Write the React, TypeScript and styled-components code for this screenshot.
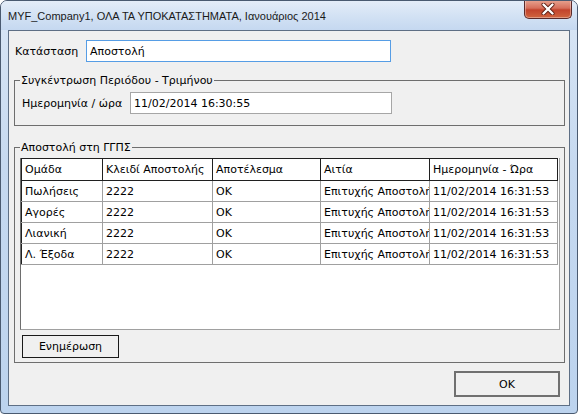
import React from "react";
import styled, { createGlobalStyle } from "styled-components";

const Global = createGlobalStyle`
  html, body { margin: 0; padding: 0; background: #ffffff; }
  body { width: 578px; height: 414px; overflow: hidden; }
  * { box-sizing: border-box; }
`;

const Window = styled.div`
  width: 578px;
  height: 414px;
  display: flex;
  flex-direction: column;
  border: 1px solid #4a5a70;
  border-radius: 7px 7px 4px 4px;
  background: linear-gradient(180deg, #d9e6f5 0%, #c6d9f0 40%, #bcd3ee 100%);
  font-family: "DejaVu Sans", Tahoma, sans-serif;
  font-size: 11px;
  color: #000;
  overflow: hidden;
`;

const TitleBar = styled.div`
  height: 29px;
  display: flex;
  align-items: flex-start;
  justify-content: space-between;
  padding: 0 5px 0 7px;
  background: linear-gradient(180deg, #e4edf8 0%, #d3e2f4 50%, #c5d8f0 100%);
`;

const TitleText = styled.div`
  font-family: "Liberation Sans", Arial, sans-serif;
  font-size: 11px;
  line-height: 14px;
  margin-top: 8px;
  color: #1a1a1a;
  white-space: nowrap;
`;

const CloseButton = styled.div`
  width: 48px;
  height: 19px;
  margin-top: -1px;
  border: 1px solid #5a2a2a;
  border-top: none;
  border-radius: 0 0 5px 5px;
  background: linear-gradient(180deg, #e8a592 0%, #d66f5b 45%, #c2432c 55%, #d0653f 100%);
  display: flex;
  align-items: center;
  justify-content: center;
  box-shadow: inset 0 0 0 1px rgba(255, 255, 255, 0.35);
`;

const Client = styled.div`
  flex: 1;
  margin: 0 7px 7px 7px;
  border: 1px solid #5e6f85;
  background: #f0f0f0;
  display: flex;
  flex-direction: column;
  padding: 9px 5px 6px 5px;
`;

const Row = styled.div<{ $indent?: number; $top?: number }>`
  display: flex;
  align-items: center;
  padding-left: ${(p) => p.$indent ?? 0}px;
  margin-top: ${(p) => p.$top ?? 0}px;
`;

const Label = styled.span<{ $w: number }>`
  width: ${(p) => p.$w}px;
  white-space: nowrap;
  flex: none;
`;

const TextInput = styled.div<{ $w: number; $focused?: boolean }>`
  width: ${(p) => p.$w}px;
  height: 22px;
  border: 1px solid ${(p) => (p.$focused ? "#569de5" : "#a6a6a6")};
  background: #fff;
  padding: 0 3px;
  display: flex;
  align-items: center;
  white-space: nowrap;
`;

const Group = styled.fieldset<{ $h: number; $top: number }>`
  margin: ${(p) => p.$top}px 0 0 0;
  width: 551px;
  height: ${(p) => p.$h}px;
  border: 1px solid #6e6e6e;
  padding: 0;
  min-width: 0;
`;

const Legend = styled.legend`
  margin-left: 5px;
  padding: 0 1px;
  font-size: 11px;
  line-height: 13px;
`;

const GroupBody = styled.div<{ $pt: number; $pl: number }>`
  padding: ${(p) => p.$pt}px 3px 0 ${(p) => p.$pl}px;
  display: flex;
  flex-direction: column;
`;

const GridBox = styled.div`
  width: 540px;
  height: 172px;
  background: #fff;
  border: 1px solid #a0a0a0;
  border-left-color: #6e6e6e;
  border-top: none;
`;

const Table = styled.table`
  border-collapse: collapse;
  table-layout: fixed;
  width: 536px;
`;

const Th = styled.th<{ $w: number }>`
  width: ${(p) => p.$w}px;
  height: 22px;
  border: 1px solid #202020;
  font-weight: normal;
  text-align: left;
  padding: 0 3px;
  white-space: nowrap;
  overflow: hidden;
`;

const Td = styled.td`
  height: 21px;
  border: 1px solid #a0a0a0;
  border-top: none;
  padding: 0 3px;
  white-space: nowrap;
  overflow: hidden;
  text-overflow: clip;
`;

const FirstTd = styled(Td)`
  border-left-color: #202020;
`;

const Button = styled.div<{ $w: number; $h: number; $thick?: boolean }>`
  width: ${(p) => p.$w}px;
  height: ${(p) => p.$h}px;
  border: ${(p) => (p.$thick ? "2px solid #707070" : "1px solid #1a1a1a")};
  background: #f0f0f0;
  display: flex;
  align-items: center;
  justify-content: center;
  white-space: nowrap;
`;

const Footer = styled.div`
  display: flex;
  justify-content: flex-end;
  padding-right: 4px;
  margin-top: 8px;
`;

const rows = [
  ["Πωλήσεις", "2222", "OK", "Επιτυχής Αποστολή", "11/02/2014 16:31:53"],
  ["Αγορές", "2222", "OK", "Επιτυχής Αποστολή", "11/02/2014 16:31:53"],
  ["Λιανική", "2222", "OK", "Επιτυχής Αποστολή", "11/02/2014 16:31:53"],
  ["Λ. Έξοδα", "2222", "OK", "Επιτυχής Αποστολή", "11/02/2014 16:31:53"],
];

const headers: [string, number][] = [
  ["Ομάδα", 81],
  ["Κλειδί Αποστολής", 110],
  ["Αποτέλεσμα", 108],
  ["Αιτία", 109],
  ["Ημερομηνία - Ώρα", 128],
];

export default function App() {
  return (
    <>
      <Global />
      <Window>
        <TitleBar>
          <TitleText>MYF_Company1, ΟΛΑ ΤΑ ΥΠΟΚΑΤΑΣΤΗΜΑΤΑ, Ιανουάριος 2014</TitleText>
          <CloseButton>
            <svg width="14" height="12" viewBox="0 0 14 12">
              <path
                d="M2.5 1.5 L11.5 10.5 M11.5 1.5 L2.5 10.5"
                stroke="#5a1d12"
                strokeWidth="4"
                strokeLinecap="round"
              />
              <path
                d="M2.5 1.5 L11.5 10.5 M11.5 1.5 L2.5 10.5"
                stroke="#ffffff"
                strokeWidth="2.4"
                strokeLinecap="round"
              />
            </svg>
          </CloseButton>
        </TitleBar>
        <Client>
          <Row $indent={1}>
            <Label $w={71}>Κατάσταση</Label>
            <TextInput $w={305} $focused>
              Αποστολή
            </TextInput>
          </Row>
          <Group $h={52} $top={12}>
            <Legend>Συγκέντρωση Περιόδου - Τριμήνου</Legend>
            <GroupBody $pt={5} $pl={7}>
              <Row>
                <Label $w={108}>Ημερομηνία / ώρα</Label>
                <TextInput $w={262}>11/02/2014 16:30:55</TextInput>
              </Row>
            </GroupBody>
          </Group>
          <Group $h={222} $top={15}>
            <Legend>Αποστολή στη ΓΓΠΣ</Legend>
            <GroupBody $pt={4} $pl={5}>
              <GridBox>
                <Table>
                  <thead>
                    <tr>
                      {headers.map(([h, w]) => (
                        <Th key={h} $w={w}>
                          {h}
                        </Th>
                      ))}
                    </tr>
                  </thead>
                  <tbody>
                    {rows.map((r) => (
                      <tr key={r[0]}>
                        <FirstTd>{r[0]}</FirstTd>
                        {r.slice(1).map((c, i) => (
                          <Td key={i}>{c}</Td>
                        ))}
                      </tr>
                    ))}
                  </tbody>
                </Table>
              </GridBox>
              <Row $indent={2} $top={5}>
                <Button $w={97} $h={23}>
                  Ενημέρωση
                </Button>
              </Row>
            </GroupBody>
          </Group>
          <Footer>
            <Button $w={106} $h={26} $thick>
              OK
            </Button>
          </Footer>
        </Client>
      </Window>
    </>
  );
}
